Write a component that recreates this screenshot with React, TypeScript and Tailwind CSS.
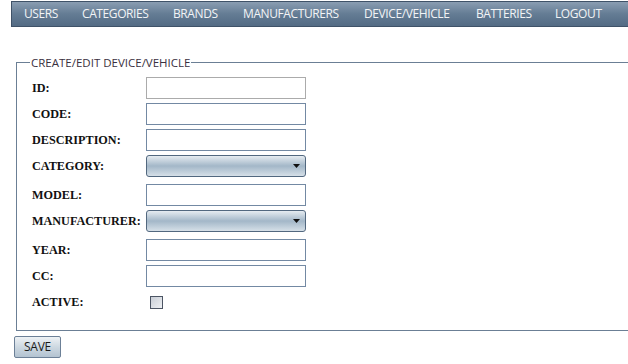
import React from 'react';

const navItems = [
  { label: 'USERS', w: 'w-[58px]' },
  { label: 'CATEGORIES', w: 'w-[91px]' },
  { label: 'BRANDS', w: 'w-[70px]' },
  { label: 'MANUFACTURERS', w: 'w-[121px]' },
  { label: 'DEVICE/VEHICLE', w: 'w-[112px]' },
  { label: 'BATTERIES', w: 'w-[79px]' },
  { label: 'LOGOUT', w: 'w-[70px]' },
];

const TextBox = ({ muted = false }: { muted?: boolean }) => (
  <input
    type="text"
    className={`w-[160px] h-[22px] bg-white border ${muted ? 'border-[#ababab]' : 'border-[#7389a3]'} outline-none`}
  />
);

const DropDown = () => (
  <div className="relative w-[160px] h-[22px] rounded-[3px] border border-[#52687f] bg-gradient-to-b from-[#e6ecf1] via-[#a3b7c8] to-[#d6e0e8]">
    <svg className="absolute right-[5px] top-[8px]" width="7" height="4" viewBox="0 0 7 4">
      <path d="M0 0 H7 L3.5 4 Z" fill="#111" />
    </svg>
  </div>
);

const Row = ({ label, tall = false, children }: { label: string; tall?: boolean; children: React.ReactNode }) => (
  <div className={`flex items-start ${tall ? 'h-[29px]' : 'h-[26px]'}`}>
    <label className="w-[114px] shrink-0 h-[22px] flex items-center whitespace-nowrap font-bold text-[12.2px] text-[#111] font-['Liberation_Serif',serif]">
      {label}
    </label>
    {children}
  </div>
);

export default function App() {
  return (
    <div className="w-[628px] h-[364px] bg-white overflow-hidden font-['Open_Sans',sans-serif]">
      <div className="pt-[1px] pl-[11px]">
        <nav className="h-[26px] w-[640px] flex items-center pl-[12px] border border-[#3f5268] bg-gradient-to-b from-[#8a9db2] via-[#647c94] to-[#536b84]">
          {navItems.map((item) => (
            <a key={item.label} className={`${item.w} shrink-0 text-[12px] tracking-[-0.4px] text-[#f2f4f6] cursor-pointer`}>
              {item.label}
            </a>
          ))}
        </nav>
      </div>

      <fieldset className="mt-[27px] ml-[16px] w-[640px] h-[277px] border border-[#6b7f95] pl-[15px] pt-[6px]">
        <legend className="px-[1px] ml-[-2px] text-[11.5px] text-[#3a3040]">CREATE/EDIT DEVICE/VEHICLE</legend>
        <Row label="ID:"><TextBox muted /></Row>
        <Row label="CODE:"><TextBox /></Row>
        <Row label="DESCRIPTION:"><TextBox /></Row>
        <Row label="CATEGORY:" tall><DropDown /></Row>
        <Row label="MODEL:"><TextBox /></Row>
        <Row label="MANUFACTURER:" tall><DropDown /></Row>
        <Row label="YEAR:"><TextBox /></Row>
        <Row label="CC:"><TextBox /></Row>
        <Row label="ACTIVE:">
          <div className="h-[22px] flex items-center pl-[4px]">
            <span className="block w-[13px] h-[13px] border border-[#4c5564] bg-gradient-to-br from-[#c9ced6] to-[#eef0f3]" />
          </div>
        </Row>
      </fieldset>

      <div className="pl-[14px] pt-[2px]">
        <button className="w-[47px] h-[22px] rounded-[2px] border border-[#6c8097] bg-gradient-to-b from-[#eef2f5] via-[#cdd8e1] to-[#b3c3d1] text-[12px] tracking-[-0.3px] text-[#1a1a1a] font-['Open_Sans',sans-serif]">
          SAVE
        </button>
      </div>
    </div>
  );
}
